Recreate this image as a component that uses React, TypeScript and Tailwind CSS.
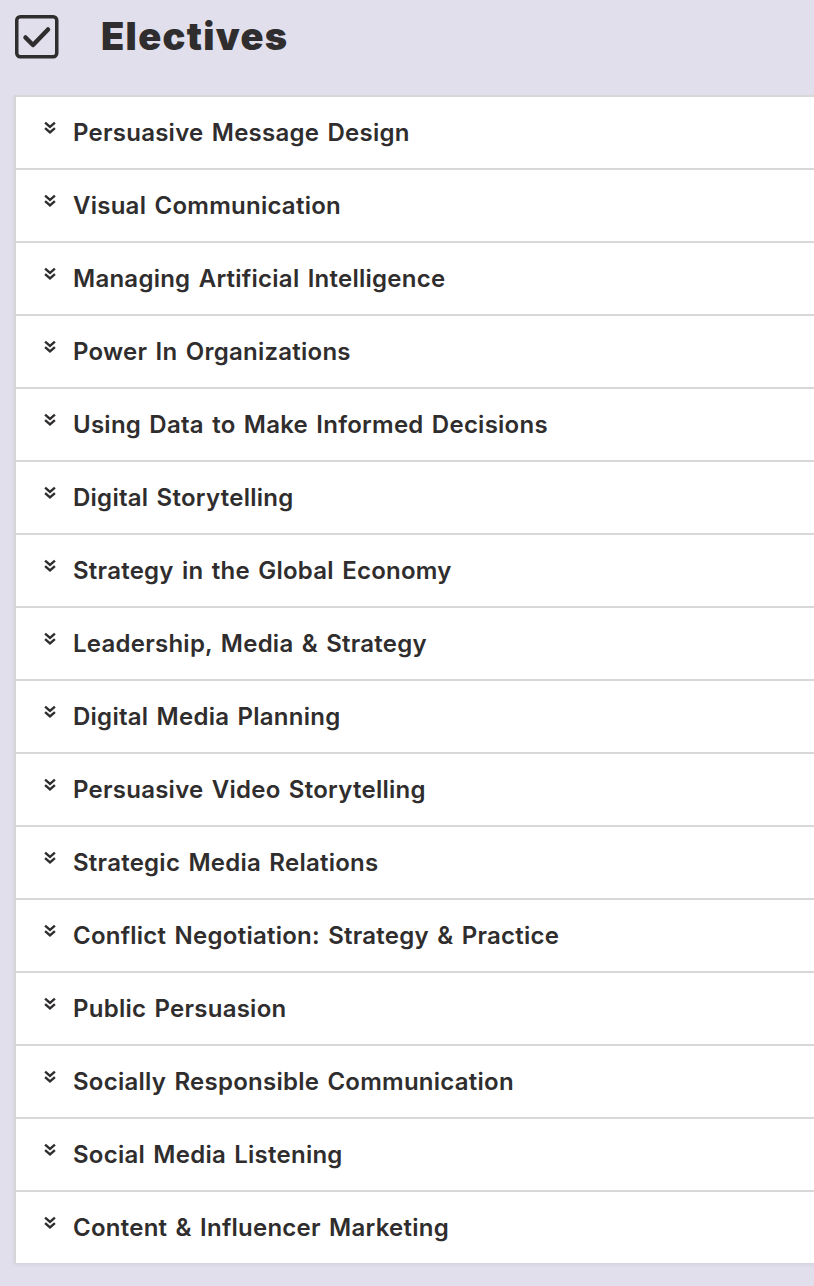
import React from "react";

const items = [
  "Persuasive Message Design",
  "Visual Communication",
  "Managing Artificial Intelligence",
  "Power In Organizations",
  "Using Data to Make Informed Decisions",
  "Digital Storytelling",
  "Strategy in the Global Economy",
  "Leadership, Media & Strategy",
  "Digital Media Planning",
  "Persuasive Video Storytelling",
  "Strategic Media Relations",
  "Conflict Negotiation: Strategy & Practice",
  "Public Persuasion",
  "Socially Responsible Communication",
  "Social Media Listening",
  "Content & Influencer Marketing",
];

function Chevrons() {
  return (
    <svg width="12" height="14" viewBox="0 0 12 14" fill="none" stroke="#2f2d2d" strokeWidth="2.4" strokeLinecap="square">
      <path d="M2 2.5 L6 6 L10 2.5" />
      <path d="M2 8 L6 11.5 L10 8" />
    </svg>
  );
}

export default function App() {
  return (
    <div className="min-h-[1286px] w-[814px] overflow-hidden bg-[#e1dfec]" style={{ fontFamily: "Inter, 'Open Sans', sans-serif" }}>
      <div className="flex h-[95px] items-start pl-[15px] pt-[15px]">
        <svg width="44" height="44" viewBox="0 0 44 44" fill="none">
          <rect x="1.75" y="1.75" width="40" height="40" rx="3.5" stroke="#2f2d2d" strokeWidth="3.5" />
          <path d="M10.5 22.5 L18 30 L33 14.5" stroke="#2f2d2d" strokeWidth="4.5" strokeLinecap="round" strokeLinejoin="round" />
        </svg>
        <h1 className="ml-[42px] mt-[-1px] text-[38px] font-black leading-[44px] tracking-[1.3px] text-[#2f2d2d]">Electives</h1>
      </div>
      <div className="ml-[14px] w-[820px] border-l-2 border-[#d6d5d8] bg-white shadow-[0_2px_4px_rgba(0,0,0,0.06)]">
        {items.map((t, i) => (
          <div key={i} className="flex h-[73px] items-center border-t-2 border-[#d8d8d8]">
            <div className="ml-[28px] mt-[-10px] flex w-[14px] justify-start">
              <Chevrons />
            </div>
            <span className="ml-[15px] text-[24px] font-semibold leading-none tracking-[0.25px] [word-spacing:2px] text-[#2f2d2d]">{t}</span>
          </div>
        ))}
      </div>
    </div>
  );
}
